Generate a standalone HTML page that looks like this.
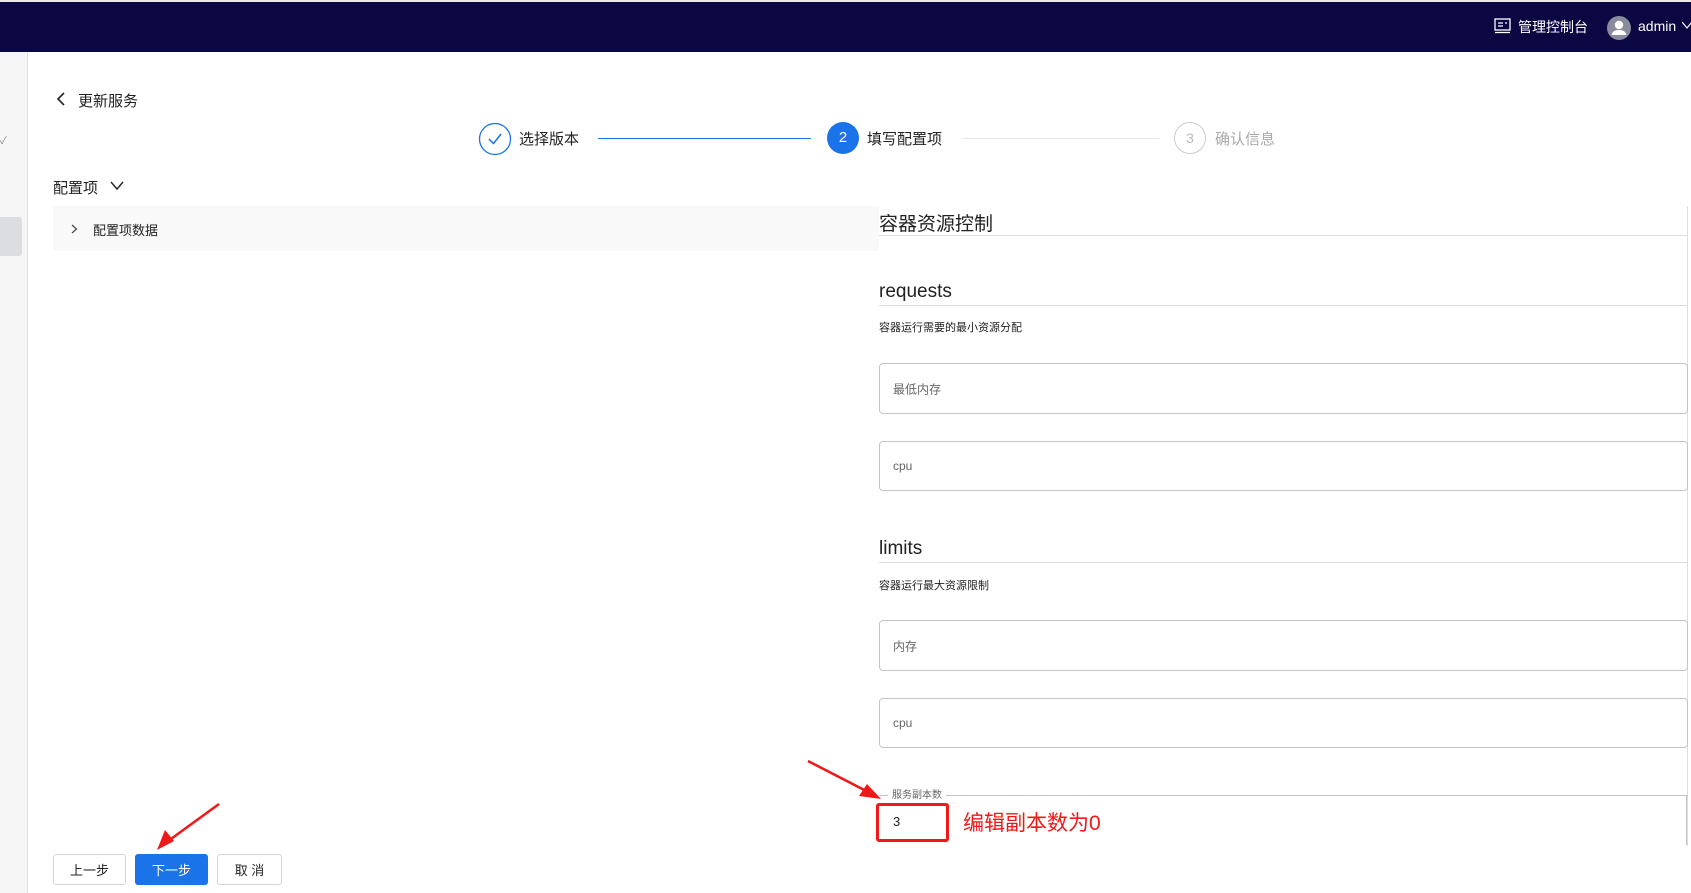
<!DOCTYPE html>
<html><head><meta charset="utf-8"><style>
*{box-sizing:border-box;margin:0;padding:0}
body{width:1691px;height:893px;overflow:hidden;background:#fff;font-family:"Liberation Sans","Noto Sans CJK SC",sans-serif;color:#222;position:relative}
.a{position:absolute;white-space:nowrap}
.inp{position:absolute;left:879px;width:809px;border:1px solid #c4c4c4;border-radius:4px;background:#fff}
.inp span{position:absolute;left:13px;top:50%;transform:translateY(-50%);font-size:12px;color:#666}
.hl{position:absolute;left:879px;width:809px;height:1px;background:#ddd}
.btn{position:absolute;top:854px;height:31px;border:1px solid #d5d5d5;border-radius:3px;font-size:13px;display:flex;align-items:center;justify-content:center;background:#fff}
</style></head><body>
<div class="a" style="left:0;top:0;width:1691px;height:52px;background:#0b0743;border-top:2px solid #e8e8e8"></div>
<svg class="a" style="left:1494px;top:18px" width="18" height="16" viewBox="0 0 18 16"><rect x="1" y="1" width="15" height="11" fill="none" stroke="#fff" stroke-width="1.3"/><path d="M4 5h5M4 8h5M11 5h2M1 14.5h15" stroke="#fff" stroke-width="1.3"/></svg>
<div class="a" style="left:1518px;top:17px;font-size:14px;color:#fff">管理控制台</div>
<svg class="a" style="left:1607px;top:16px" width="24" height="24" viewBox="0 0 24 24"><circle cx="12" cy="12" r="12" fill="#8b8b9e"/><circle cx="12" cy="9" r="4.2" fill="#fff"/><path d="M4.5 19c1-4 4-5 7.5-5s6.5 1 7.5 5z" fill="#fff"/></svg>
<div class="a" style="left:1638px;top:18px;font-size:14px;color:#fff">admin</div>
<svg class="a" style="left:1682px;top:20px" width="10" height="10"><path d="M0 2l5 6 5-6" stroke="#fff" fill="none" stroke-width="1.2"/></svg>

<div class="a" style="left:0;top:52px;width:28px;height:841px;background:#f5f5f6;border-right:1px solid #e3e3e3"></div>
<div class="a" style="left:0;top:217px;width:22px;height:39px;background:#dcdde0;border-radius:0 3px 3px 0"></div>
<div class="a" style="left:0;top:132px;font-size:10px;color:#888">✓</div>

<svg class="a" style="left:55px;top:92px" width="12" height="14"><path d="M9 1L3 7l6 6" stroke="#222" fill="none" stroke-width="1.6"/></svg>
<div class="a" style="left:78px;top:90px;font-size:15px">更新服务</div>

<svg class="a" style="left:478px;top:122px" width="34" height="34"><circle cx="17" cy="17" r="15.5" fill="none" stroke="#1a73e8" stroke-width="1.3"/><path d="M11 17l4.5 4.5L23 12" stroke="#1a73e8" fill="none" stroke-width="1.5"/></svg>
<div class="a" style="left:519px;top:128px;font-size:15px">选择版本</div>
<div class="a" style="left:598px;top:138px;width:213px;height:1px;background:#1a73e8"></div>
<div class="a" style="left:827px;top:122px;width:32px;height:32px;border-radius:50%;background:#1a73e8;color:#fff;font-size:15px;text-align:center;line-height:32px">2</div>
<div class="a" style="left:867px;top:128px;font-size:15px">填写配置项</div>
<div class="a" style="left:963px;top:138px;width:196px;height:1px;background:#e5e5e5"></div>
<div class="a" style="left:1174px;top:122px;width:32px;height:32px;border-radius:50%;border:1.3px solid #ccc;color:#bbb;font-size:14px;text-align:center;line-height:30px">3</div>
<div class="a" style="left:1215px;top:128px;font-size:15px;color:#aaa">确认信息</div>

<div class="a" style="left:53px;top:177px;font-size:15px">配置项</div>
<svg class="a" style="left:110px;top:181px" width="14" height="10"><path d="M1 1l6 7 6-7" stroke="#222" fill="none" stroke-width="1.4"/></svg>
<div class="a" style="left:53px;top:206px;width:826px;height:45px;background:#f9f9f9"></div>
<svg class="a" style="left:71px;top:224px" width="8" height="10"><path d="M1 1l4.5 4-4.5 4" stroke="#444" fill="none" stroke-width="1.2"/></svg>
<div class="a" style="left:93px;top:220px;font-size:13px">配置项数据</div>

<div class="a" style="left:879px;top:209px;font-size:19px">容器资源控制</div>
<div class="hl" style="top:235px"></div>
<div class="a" style="left:1687px;top:206px;width:4px;height:640px;border-left:1px solid #ddd"></div>
<div class="a" style="left:879px;top:281px;font-size:19px">requests</div>
<div class="hl" style="top:305px"></div>
<div class="a" style="left:879px;top:319px;font-size:11px">容器运行需要的最小资源分配</div>
<div class="inp" style="top:363px;height:51px"><span>最低内存</span></div>
<div class="inp" style="top:441px;height:50px"><span>cpu</span></div>
<div class="a" style="left:879px;top:538px;font-size:19px">limits</div>
<div class="hl" style="top:562px"></div>
<div class="a" style="left:879px;top:577px;font-size:11px">容器运行最大资源限制</div>
<div class="inp" style="top:620px;height:51px"><span>内存</span></div>
<div class="inp" style="top:698px;height:50px"><span>cpu</span></div>

<div class="a" style="left:879px;top:795px;width:809px;height:1px;background:#c4c4c4"></div>
<div class="a" style="left:1686px;top:795px;width:1px;height:50px;background:#c4c4c4"></div>
<div class="a" style="left:888px;top:786px;font-size:10px;color:#666;background:#fff;padding:0 4px">服务副本数</div>
<div class="a" style="left:876px;top:803px;width:73px;height:39px;border:3px solid #f01818;border-radius:3px;background:#fff"></div>
<div class="a" style="left:893px;top:814px;font-size:13px">3</div>
<div class="a" style="left:963px;top:807px;font-size:21px;color:#f01818">编辑副本数为0</div>

<svg class="a" style="left:0;top:0" width="1691" height="893"><g fill="#f01818" stroke="#f01818">
<path d="M808 761L872 794" stroke-width="2.5"/><path d="M881 799l-22-3 8-12z" stroke="none"/>
<path d="M219 804L164 844" stroke-width="2.5"/><path d="M157 850l8-20 9 11z" stroke="none"/></g></svg>

<div class="btn" style="left:53px;width:73px">上一步</div>
<div class="btn" style="left:135px;width:73px;background:#1a73e8;border-color:#1a73e8;color:#fff">下一步</div>
<div class="btn" style="left:217px;width:65px">取 消</div>
</body></html>
